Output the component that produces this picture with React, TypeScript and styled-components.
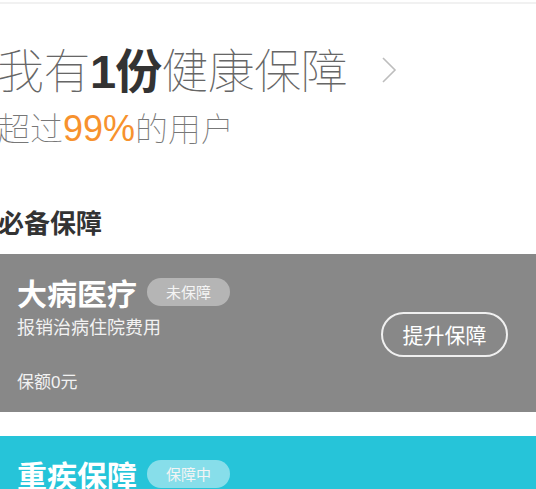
import * as React from 'react'
import styled, { createGlobalStyle } from 'styled-components'

const GlobalStyle = createGlobalStyle`
  html, body {
    margin: 0;
    padding: 0;
    background: #fff;
    overflow: hidden;
  }
  * {
    box-sizing: border-box;
  }
  body {
    font-family: 'Liberation Sans', 'Noto Sans CJK SC', sans-serif;
  }
`

const thin = `'Noto Sans CJK SC Thin', 'Noto Sans CJK SC Light', 'Noto Sans CJK SC DemiLight', 'Noto Sans CJK SC', sans-serif`

const Page = styled.div`
  width: 536px;
  height: 489px;
  overflow: hidden;
`

const TopRule = styled.div`
  height: 2px;
  margin-top: 2px;
  background: #f1f1f1;
`

const Summary = styled.div`
  margin: 35px 0 0 -3px;
`

const TitleRow = styled.div`
  display: flex;
  align-items: center;
  gap: 34px;
`

const Title = styled.h1`
  margin: 0;
  font-family: ${thin};
  font-size: 47px;
  line-height: 58px;
  font-weight: 100;
  color: #666;
  letter-spacing: -0.5px;

  b {
    font-family: 'Liberation Sans', 'Noto Sans CJK SC', sans-serif;
    font-weight: 700;
    color: #333;
    letter-spacing: -1px;
  }
`

const Subtitle = styled.p`
  margin: 7px 0 0;
  font-family: ${thin};
  font-size: 33px;
  line-height: 38px;
  font-weight: 100;
  color: #777;

  em {
    font-family: 'Liberation Sans', sans-serif;
    font-style: normal;
    font-weight: 400;
    font-size: 36px;
    line-height: 0;
    color: #f7922e;
  }
`

const SectionTitle = styled.h2`
  margin: 60px 0 16px -2px;
  font-family: 'Noto Sans CJK SC', sans-serif;
  font-size: 26px;
  line-height: 32px;
  font-weight: 700;
  color: #333;
`

const Card = styled.div<{ $bg: string }>`
  height: 158px;
  margin-bottom: 24px;
  padding: 18px 28px 0 17px;
  background: ${p => p.$bg};
  display: flex;
  justify-content: space-between;
  color: #fff;
  font-family: 'Noto Sans CJK SC', sans-serif;
`

const CardMain = styled.div`
  display: flex;
  flex-direction: column;
`

const CardHead = styled.div`
  height: 40px;
  display: flex;
  align-items: center;
  gap: 10px;
`

const CardTitle = styled.span`
  font-size: 30px;
  font-weight: 700;
  line-height: 40px;
`

const Badge = styled.span<{ $tint: string }>`
  height: 28px;
  padding: 0 19px;
  border-radius: 14px;
  background: ${p => p.$tint};
  font-size: 15px;
  line-height: 28px;
  color: #f4f4f4;
`

const CardDesc = styled.div`
  margin-top: 2px;
  font-size: 18px;
  line-height: 24px;
  color: #f2f2f2;
`

const CardAmount = styled.div`
  margin-top: 33px;
  font-size: 17px;
  line-height: 24px;
  color: #f2f2f2;
  font-family: 'Liberation Sans', 'Noto Sans CJK SC', sans-serif;
`

const UpgradeButton = styled.button`
  align-self: center;
  margin-top: -16px;
  width: 127px;
  height: 45px;
  border: 2px solid #f0f0f0;
  border-radius: 23px;
  background: transparent;
  color: #fff;
  font-family: 'Noto Sans CJK SC', sans-serif;
  font-size: 21px;
  padding: 0;
`

const Chevron = () => (
  <svg width="16" height="28" viewBox="0 0 16 28">
    <polyline points="2,2 14,14 2,26" fill="none" stroke="#bdbdbd" strokeWidth="1.6" />
  </svg>
)

const cards = [
  { title: '大病医疗', badge: '未保障', desc: '报销治病住院费用', amount: '保额0元', bg: '#888888', tint: 'rgba(255,255,255,0.38)', action: '提升保障' },
  { title: '重疾保障', badge: '保障中', desc: '确诊即赔付', amount: '保额50万元', bg: '#26c4d9', tint: 'rgba(255,255,255,0.45)', action: '' },
]

export default function App() {
  return (
    <Page>
      <GlobalStyle />
      <TopRule />
      <Summary>
        <TitleRow>
          <Title>
            我有<b>1份</b>健康保障
          </Title>
          <Chevron />
        </TitleRow>
        <Subtitle>
          超过<em>99%</em>的用户
        </Subtitle>
      </Summary>
      <SectionTitle>必备保障</SectionTitle>
      {cards.map(c => (
        <Card key={c.title} $bg={c.bg}>
          <CardMain>
            <CardHead>
              <CardTitle>{c.title}</CardTitle>
              <Badge $tint={c.tint}>{c.badge}</Badge>
            </CardHead>
            <CardDesc>{c.desc}</CardDesc>
            <CardAmount>{c.amount}</CardAmount>
          </CardMain>
          {c.action && <UpgradeButton>{c.action}</UpgradeButton>}
        </Card>
      ))}
    </Page>
  )
}
